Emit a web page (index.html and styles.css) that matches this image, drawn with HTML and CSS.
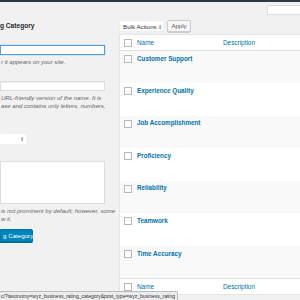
FILE: index.html
```html
<!DOCTYPE html>
<html lang="en">
<head>
    <meta charset="UTF-8">
    <title>Rating Categories</title>
    <link rel="stylesheet" href="styles.css">
</head>
<body>
    <div class="adminbar"></div>
    <div class="wrap">
        <div class="col-left">
            <h2 class="form-title">g Category</h2>

            <input class="text-input focused" type="text">
            <p class="hint">r it appears on your site.</p>

            <input class="text-input slug" type="text">
            <p class="hint">URL-friendly version of the name. It is<br>ase and contains only letters, numbers,</p>

            <div class="select parent"><span class="arrows">&#8661;</span></div>

            <textarea class="textarea"></textarea>
            <p class="hint">is not prominent by default; however, some<br>w it.</p>

            <button class="button-primary">g Category</button>
        </div>

        <div class="col-right">
            <div class="search-row">
                <input class="search-input" type="search">
            </div>
            <div class="tablenav">
                <div class="select bulk">Bulk Actions <span class="arrows">&#8661;</span></div>
                <button class="button">Apply</button>
            </div>

            <table class="list-table">
                <thead>
                    <tr>
                        <td class="cb"><span class="checkbox"></span></td>
                        <th class="col-name"><a href="#">Name</a></th>
                        <th class="col-desc"><a href="#">Description</a></th>
                    </tr>
                </thead>
                <tbody>
                    <tr><td class="cb"><span class="checkbox"></span></td><td class="col-name"><a class="row-title" href="#">Customer Support</a></td><td class="col-desc"></td></tr>
                    <tr><td class="cb"><span class="checkbox"></span></td><td class="col-name"><a class="row-title" href="#">Experience Quality</a></td><td class="col-desc"></td></tr>
                    <tr><td class="cb"><span class="checkbox"></span></td><td class="col-name"><a class="row-title" href="#">Job Accomplishment</a></td><td class="col-desc"></td></tr>
                    <tr><td class="cb"><span class="checkbox"></span></td><td class="col-name"><a class="row-title" href="#">Proficiency</a></td><td class="col-desc"></td></tr>
                    <tr><td class="cb"><span class="checkbox"></span></td><td class="col-name"><a class="row-title" href="#">Reliability</a></td><td class="col-desc"></td></tr>
                    <tr><td class="cb"><span class="checkbox"></span></td><td class="col-name"><a class="row-title" href="#">Teamwork</a></td><td class="col-desc"></td></tr>
                    <tr><td class="cb"><span class="checkbox"></span></td><td class="col-name"><a class="row-title" href="#">Time Accuracy</a></td><td class="col-desc"></td></tr>
                </tbody>
                <tfoot>
                    <tr>
                        <td class="cb"><span class="checkbox"></span></td>
                        <th class="col-name"><a href="#">Name</a></th>
                        <th class="col-desc"><a href="#">Description</a></th>
                    </tr>
                </tfoot>
            </table>
        </div>
    </div>

    <div class="statusbar">c/?taxonomy=wyz_business_rating_category&amp;post_type=wyz_business_rating</div>
</body>
</html>
```

FILE: styles.css
```css
html {
    overflow: hidden;
}

body {
    margin: 0;
    width: 300px;
    height: 300px;
    overflow: hidden;
    background-color: #f1f1f1;
    font-family: "Liberation Sans", Arial, sans-serif;
    color: #444;
}

.adminbar {
    height: 2px;
    background-color: #32373c;
}

.wrap {
    display: flex;
    gap: 14px;
}

/* left column: add new term form */
.col-left {
    width: 105px;
    flex: none;
    display: flex;
    flex-direction: column;
    align-items: flex-start;
}

.form-title {
    margin: 20px 0 0;
    font-size: 6.6px;
    line-height: 8px;
    font-weight: bold;
    color: #23282d;
}

.text-input {
    display: block;
    width: 105px;
    height: 10px;
    margin: 15px 0 0;
    padding: 0;
    box-sizing: border-box;
    border: 1px solid #ddd;
    background-color: #fff;
    box-shadow: inset 0 1px 1px rgba(0, 0, 0, 0.07);
}

.text-input.focused {
    border-color: #5b9dd9;
    box-shadow: 0 0 1px rgba(30, 140, 190, 0.8);
}

.text-input.slug {
    margin-top: 15.5px;
}

.hint {
    margin: 2.5px 0 0 1px;
    font-size: 6px;
    line-height: 8px;
    font-style: italic;
    color: #666;
    white-space: nowrap;
}

.select {
    box-sizing: border-box;
    height: 10px;
    border-radius: 2px;
    background-color: #fff;
    font-size: 6.2px;
    line-height: 10px;
    color: #32373c;
    white-space: nowrap;
}

.select .arrows {
    font-size: 5px;
    color: #555;
}

.select.parent {
    width: 26px;
    margin-top: 24px;
    text-align: right;
    padding-right: 2px;
}

.textarea {
    display: block;
    width: 105px;
    height: 43px;
    margin: 17px 0 0;
    padding: 0;
    box-sizing: border-box;
    border: 1px solid #ddd;
    background-color: #fff;
    resize: none;
}

.textarea + .hint {
    margin-top: 3px;
}

.button-primary {
    margin-top: 6px;
    width: 33px;
    height: 13px;
    padding: 0 0 0 2px;
    border: 1px solid #0073aa;
    border-radius: 0 2px 2px 0;
    background-color: #0085ba;
    color: #fff;
    font-family: inherit;
    font-size: 6.2px;
    line-height: 11px;
    text-align: left;
    white-space: nowrap;
    box-shadow: 0 1px 0 #006799;
}

/* right column: term list */
.col-right {
    flex: 1;
    min-width: 0;
}

.search-row {
    display: flex;
    justify-content: flex-end;
    margin-top: 3px;
}

.search-input {
    width: 38px;
    height: 10px;
    margin: 0 -5px 0 0;
    padding: 0;
    box-sizing: border-box;
    border: 1px solid #ddd;
    background-color: #fff;
}

.tablenav {
    display: flex;
    gap: 3px;
    margin-top: 5px;
    height: 12px;
}

.select.bulk {
    width: 45px;
    height: 12px;
    line-height: 12px;
    padding-left: 3px;
    border: 1px solid #eee;
}

.button {
    width: 24px;
    height: 12px;
    padding: 0;
    border: 1px solid #ccc;
    border-radius: 2px;
    background-color: #f7f7f7;
    color: #555;
    font-family: inherit;
    font-size: 6px;
    line-height: 10px;
    box-shadow: 0 1px 0 #ccc;
}

.list-table {
    margin-top: 2px;
    width: 220px;
    border-collapse: collapse;
    table-layout: fixed;
    background-color: #fff;
    border: 1px solid #e5e5e5;
}

.list-table td,
.list-table th {
    padding: 0;
    vertical-align: top;
    text-align: left;
}

.list-table .cb {
    width: 14px;
}

.list-table .col-name {
    width: 83px;
    padding-left: 3px;
}

.list-table .col-desc {
    padding-left: 3px;
}

.list-table thead tr,
.list-table tfoot tr {
    height: 16px;
}

.list-table thead tr {
    border-bottom: 1px solid #e1e1e1;
}

.list-table tfoot tr {
    border-top: 1px solid #e1e1e1;
}

.list-table th a {
    display: block;
    padding-top: 4px;
    font-size: 6.4px;
    line-height: 8px;
    font-weight: normal;
    color: #0073aa;
    text-decoration: none;
}

.list-table thead .checkbox,
.list-table tfoot .checkbox {
    margin-top: 4px;
}

.list-table tbody tr {
    height: 32.6px;
}

.list-table tbody tr:nth-child(odd) {
    background-color: #f9f9f9;
}

.checkbox {
    display: block;
    width: 8px;
    height: 8px;
    margin: 4px 0 0 4px;
    box-sizing: border-box;
    border: 1px solid #b4b9be;
    background-color: #fff;
}

.row-title {
    display: block;
    padding-top: 3.5px;
    font-size: 6.3px;
    line-height: 8px;
    font-weight: bold;
    color: #0073aa;
    text-decoration: none;
    white-space: nowrap;
}

/* browser link preview in the corner */
.statusbar {
    position: fixed;
    left: 0;
    bottom: 0;
    height: 9px;
    box-sizing: border-box;
    padding: 0 2px 0 1px;
    border: 1px solid #bbb;
    border-left: none;
    border-bottom: none;
    border-top-right-radius: 2px;
    background-color: #ececec;
    font-size: 5px;
    line-height: 8px;
    color: #333;
    white-space: nowrap;
}
```
